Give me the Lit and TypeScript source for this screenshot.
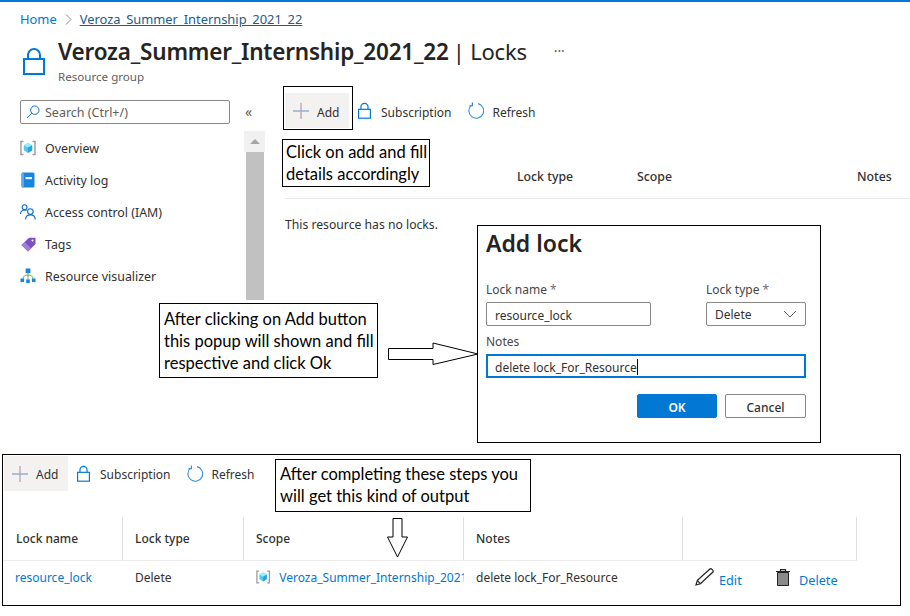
import { LitElement, html, css } from "lit";
import { customElement } from "lit/decorators.js";

const lockIcon = (w: number, h: number) => html`<svg width=${w} height=${h} viewBox="0 0 22 28" fill="none" stroke="#0078d4" stroke-width="2">
  <rect x="1" y="12" width="20" height="15" />
  <path d="M5 12V8a6 6 0 0 1 12 0v4" />
</svg>`;

const plusIcon = html`<svg width="16" height="16" viewBox="0 0 16 16">
  <path d="M0 8h16" stroke="#7f9cc4" stroke-width="1.2" />
  <path d="M8 0v16" stroke="#b29cb4" stroke-width="1.2" />
</svg>`;

const refreshIcon = html`<svg width="17" height="17" viewBox="0 0 17 17" fill="none" stroke="#2f8fdc" stroke-width="1.1">
  <path d="M11 1.6A7.4 7.4 0 1 1 4.4 3.2" />
  <path d="M5.4 0.6v3.2H2.4" stroke="#3a7fd0" />
</svg>`;

const cubeIcon = html`<svg width="16" height="16" viewBox="0 0 16 16">
  <path d="M3.5 1.5H1v13h2.5M12.5 1.5H15v13h-2.5" fill="none" stroke="#9a9a9a" stroke-width="1.4" />
  <path d="M8 3l4.2 2.3v5L8 13l-4.2-2.7v-5z" fill="#50c8ef" />
  <path d="M8 3l4.2 2.3L8 7.6 3.8 5.3z" fill="#9cebff" />
  <path d="M8 7.6l4.2-2.3v5L8 13z" fill="#2aa5d8" />
</svg>`;

const bookIcon = html`<svg width="14" height="16" viewBox="0 0 14 16">
  <rect x="0.5" y="0.5" width="13" height="15" rx="1.5" fill="#1b84dc" />
  <rect x="0.5" y="0.5" width="2.5" height="15" rx="1" fill="#5ea9e8" />
  <rect x="4.5" y="5" width="6.5" height="2.2" fill="#e6f2fb" />
</svg>`;

const peopleIcon = html`<svg width="16" height="16" viewBox="0 0 16 16" fill="none" stroke="#0f6fc6" stroke-width="1.1">
  <circle cx="4.6" cy="3.2" r="2.4" />
  <path d="M0.5 10c0-2.6 1.7-4 4-4 .8 0 1.5.2 2 .5" />
  <circle cx="10.4" cy="7.6" r="2.8" />
  <path d="M5.6 15.5c0-2.8 2-4.6 4.8-4.6s4.8 1.8 4.8 4.6" />
</svg>`;

const tagIcon = html`<svg width="15" height="15" viewBox="0 0 15 15">
  <path d="M0.5 8L8 0.8 14.5 0.8V7L7 14.5z" fill="#7e4fc4" />
  <path d="M0.5 8L7 14.5 10 11.5 4 5z" fill="#a07fd8" />
  <circle cx="11.5" cy="3.6" r="1" fill="#fff" />
</svg>`;

const treeIcon = html`<svg width="16" height="16" viewBox="0 0 16 16">
  <path d="M8 4v8M3 11c0-3 2-4 5-4s5 1 5 4" fill="none" stroke="#5cb85c" stroke-width="1" />
  <rect x="5.6" y="0.5" width="4.8" height="4.5" fill="#1b84dc" />
  <rect x="0.5" y="10.5" width="3.6" height="3.6" fill="#1b84dc" />
  <rect x="6.2" y="11.5" width="3.6" height="3.6" fill="#1b84dc" />
  <rect x="11.9" y="10.5" width="3.6" height="3.6" fill="#1b84dc" />
</svg>`;

const searchIcon = html`<svg width="14" height="14" viewBox="0 0 14 14" fill="none" stroke="#0f6fc6" stroke-width="1">
  <circle cx="8.8" cy="5.2" r="4.2" />
  <path d="M5.8 8.2L1 13" />
</svg>`;

const chevronIcon = html`<svg width="14" height="8" viewBox="0 0 14 8" fill="none" stroke="#605e5c" stroke-width="1">
  <path d="M1 1l6 6 6-6" />
</svg>`;

const crumbChevron = html`<svg width="7" height="11" viewBox="0 0 7 11" fill="none" stroke="#8a8886" stroke-width="1">
  <path d="M1 0.5l5 5-5 5" />
</svg>`;

const pencilIcon = html`<svg width="20" height="18" viewBox="0 0 20 18" fill="none" stroke="#222" stroke-width="1.2">
  <path d="M1 17l1.4-4.6L14.6 1.2a1.6 1.6 0 0 1 2.2 0l.9.9a1.6 1.6 0 0 1 0 2.2L5.4 15.8z" />
  <path d="M2.4 12.4l3 3.4" />
</svg>`;

const trashIcon = html`<svg width="14" height="17" viewBox="0 0 14 17">
  <path d="M1.5 3.5h11V16.5h-11z" fill="#8a8a8a" stroke="#222" stroke-width="1" />
  <path d="M0 2.5h14M4.5 2.5V0.7h5v1.8" fill="none" stroke="#222" stroke-width="1.2" />
</svg>`;

const rightArrow = html`<svg width="92" height="24" viewBox="0 0 92 24" fill="#fff" stroke="#000" stroke-width="1">
  <path d="M0.5 6.5H45V1L90 12 45 22.5V17.5H0.5z" />
</svg>`;

const downArrow = html`<svg width="22" height="40" viewBox="0 0 22 40" fill="#fff" stroke="#000" stroke-width="1">
  <path d="M6 0.5H15V19H20.5L10.5 39 0.5 19H6z" />
</svg>`;

const navItems = [
  { icon: cubeIcon, label: "Overview" },
  { icon: bookIcon, label: "Activity log" },
  { icon: peopleIcon, label: "Access control (IAM)" },
  { icon: tagIcon, label: "Tags" },
  { icon: treeIcon, label: "Resource visualizer" },
];

const toolbar = html`
  <div class="toolbar">
    <div class="tool add">${plusIcon}<span>Add</span></div>
    <div class="tool sub">${lockIcon(13, 17)}<span>Subscription</span></div>
    <div class="tool refresh">${refreshIcon}<span>Refresh</span></div>
  </div>
`;

@customElement("app-root")
export class AppRoot extends LitElement {
  static styles = css`
    :host {
      display: block;
      width: 910px;
      height: 616px;
      background: #fff;
      color: #323130;
      font-family: "Noto Sans", "Open Sans", sans-serif;
      font-size: 12px;
      overflow: hidden;
    }
    .top {
      position: relative;
      height: 452px;
      border-top: 2px solid #0078d4;
      box-sizing: border-box;
    }
    .crumbs {
      display: flex;
      align-items: center;
      gap: 8px;
      height: 34px;
      padding-left: 20px;
      font-size: 12.9px;
    }
    .crumbs .home {
      color: #0078d4;
    }
    .crumbs .current {
      color: #1d5c8c;
      text-decoration: underline;
    }
    .head {
      display: flex;
      height: 50px;
      padding-left: 23px;
      gap: 13px;
    }
    .head .lock {
      padding-top: 11px;
    }
    .title {
      display: flex;
      align-items: baseline;
      font-size: 22.5px;
      line-height: 31px;
      letter-spacing: -0.2px;
      color: #252423;
    }
    .title b {
      font-weight: 600;
    }
    .title .page {
      margin-left: 4px;
      font-size: 22px;
      font-weight: 400;
    }
    .title .more {
      margin-left: 27px;
      color: #605e5c;
      font-size: 14px;
      position: relative;
      top: -4px;
    }
    .kind {
      color: #605e5c;
      font-size: 11.6px;
      line-height: 14px;
    }
    .body {
      display: flex;
    }
    .side {
      width: 265px;
      flex: none;
      padding-top: 14px;
      box-sizing: border-box;
    }
    .search-row {
      display: flex;
      align-items: center;
      padding-left: 20px;
    }
    .search {
      display: flex;
      align-items: center;
      gap: 5px;
      width: 210px;
      height: 24px;
      box-sizing: border-box;
      border: 1px solid #8a8886;
      border-radius: 2px;
      padding-left: 5px;
      color: #605e5c;
      font-size: 12.5px;
    }
    .collapse {
      margin-left: 15px;
      color: #605e5c;
      font-size: 14px;
      line-height: 20px;
    }
    .nav-wrap {
      display: flex;
      margin-top: 7px;
      height: 169px;
    }
    .nav {
      flex: 1;
      padding-left: 20px;
      font-size: 12.4px;
    }
    .nav-item {
      display: flex;
      align-items: center;
      height: 32px;
      margin-top: 1px;
      margin-bottom: -1px;
    }
    .nav-icon {
      display: flex;
      justify-content: center;
      width: 16px;
      margin-right: 9px;
    }
    .scroll {
      width: 21px;
      flex: none;
      display: flex;
      flex-direction: column;
      align-items: center;
    }
    .scroll .up {
      width: 21px;
      height: 21px;
      background: #f1f1f1;
      display: flex;
      align-items: center;
      justify-content: center;
    }
    .scroll .up i {
      width: 0;
      height: 0;
      border-left: 5px solid transparent;
      border-right: 5px solid transparent;
      border-bottom: 5px solid #a6a6a6;
    }
    .scroll .thumb {
      width: 18px;
      flex: 1;
      background: #c1c1c1;
    }
    .main {
      flex: 1;
      padding: 7px 0 0 20px;
    }
    .toolbar {
      display: flex;
      align-items: stretch;
      height: 35px;
    }
    .tool {
      display: flex;
      align-items: center;
    }
    .tool span {
      padding-top: 4px;
    }
    .result .tool span {
      padding-top: 2px;
    }
    .tool.add {
      width: 64px;
      box-sizing: border-box;
      padding-left: 8px;
      gap: 8px;
      background: #f3f2f1;
    }
    .tool.sub {
      margin-left: 9px;
      gap: 10px;
    }
    .tool.refresh {
      margin-left: 16px;
      gap: 8px;
    }
    .locks-head {
      display: grid;
      grid-template-columns: 120px 220px 1fr;
      align-items: center;
      height: 44px;
      margin-top: 26px;
      padding-left: 232px;
      border-bottom: 1px solid #edebe9;
      font-weight: 500;
      font-size: 12.3px;
    }
    .empty {
      margin-top: 18px;
      line-height: 16px;
      font-size: 12.2px;
    }
    .note {
      position: absolute;
      box-sizing: border-box;
      border: 1.5px solid #000;
      background: #fff;
      color: #000;
      font-family: Lato, "Liberation Sans", sans-serif;
      font-size: 16.5px;
      line-height: 22px;
      padding: 1px 0 0 3px;
      white-space: nowrap;
    }
    .note.add-note {
      left: 282px;
      top: 137px;
      width: 148px;
      height: 48px;
    }
    .note.popup-note {
      left: 159px;
      top: 301px;
      width: 219px;
      height: 75px;
      padding: 4px 0 0 4px;
    }
    .add-frame {
      position: absolute;
      left: 283px;
      top: 84px;
      width: 70px;
      height: 44px;
      box-sizing: border-box;
      border: 1.5px solid #000;
    }
    .arrow {
      position: absolute;
      line-height: 0;
    }
    .arrow.right {
      left: 387.5px;
      top: 340px;
    }
    .dialog {
      position: absolute;
      left: 477px;
      top: 223px;
      width: 344px;
      height: 218px;
      box-sizing: border-box;
      border: 1.5px solid #000;
      background: #fff;
      padding: 2px 14px 0 8px;
    }
    .dialog h2 {
      margin: 0;
      font-size: 23px;
      font-weight: 600;
      line-height: 30px;
      color: #252423;
    }
    .fields {
      display: grid;
      grid-template-columns: 165px 100px;
      justify-content: space-between;
      margin-top: 23px;
    }
    .dialog label {
      display: block;
      line-height: 17px;
      margin-bottom: 4px;
      color: #484644;
    }
    .dialog label em {
      color: #7a6a80;
      font-style: normal;
    }
    .input {
      display: flex;
      align-items: center;
      justify-content: space-between;
      height: 24px;
      box-sizing: border-box;
      border: 1px solid #8a8886;
      border-radius: 2px;
      padding: 2px 8px 0;
    }
    .input.select {
      padding-top: 0;
    }
    .notes-label {
      margin-top: 7px;
    }
    .input.focused {
      border: 2px solid #0078d4;
      border-radius: 0;
      justify-content: flex-start;
      padding: 2px 7px 0;
    }
    .caret {
      width: 1px;
      height: 16px;
      background: #000;
    }
    .actions {
      display: flex;
      justify-content: flex-end;
      gap: 8px;
      margin-top: 16px;
    }
    .btn {
      display: flex;
      align-items: center;
      justify-content: center;
      width: 81px;
      height: 24px;
      box-sizing: border-box;
      border: 1px solid #8a8886;
      border-radius: 2px;
      padding-top: 2px;
      font-weight: 500;
    }
    .btn.primary {
      width: 80px;
      background: #0078d4;
      border-color: #0078d4;
      color: #fff;
      font-weight: 600;
    }
    .result {
      position: relative;
      margin: 2px 0 0 2px;
      width: 899px;
      height: 152px;
      box-sizing: border-box;
      border: 1.5px solid #000;
      padding: 1px 0 0 1px;
    }
    .result .note {
      left: 272px;
      top: 4px;
      width: 256px;
      height: 53px;
      padding: 3px 0 0 4px;
    }
    .result .arrow {
      left: 384px;
      top: 63px;
    }
    .table {
      display: grid;
      grid-template-columns: 120px 121px 220px 219px 174px;
      margin: 26px 0 0 -1px;
    }
    .table .th {
      display: flex;
      align-items: center;
      height: 43px;
      padding-left: 12px;
      box-sizing: border-box;
      font-weight: 500;
      border-right: 1px solid #e1dfdd;
    }
    .table .th:first-of-type,
    .table .td:first-of-type {
      padding-left: 13px;
    }
    .table .th:last-of-type {
      border-right: none;
    }
    .table .rule {
      grid-column: 1 / -1;
      height: 1px;
      background: #edebe9;
    }
    .table .td {
      display: flex;
      align-items: center;
      height: 32px;
      padding-left: 12px;
      min-width: 0;
      overflow: hidden;
      white-space: nowrap;
    }
    .link {
      color: #0078d4;
    }
    .scope {
      gap: 9px;
    }
    .scope .link {
      overflow: hidden;
    }
    .act {
      display: flex;
      align-items: flex-end;
      gap: 4px;
      width: 81px;
      font-size: 12.7px;
    }
    .act.trash {
      gap: 9px;
    }
    .act span {
      position: relative;
      top: 3px;
    }
  `;

  render() {
    return html`
      <div class="top">
        <div class="crumbs">
          <span class="home">Home</span>
          ${crumbChevron}
          <span class="current">Veroza_Summer_Internship_2021_22</span>
        </div>
        <div class="head">
          <div class="lock">${lockIcon(22, 28)}</div>
          <div>
            <div class="title">
              <b>Veroza_Summer_Internship_2021_22</b>
              <span class="page">| Locks</span>
              <span class="more">···</span>
            </div>
            <div class="kind">Resource group</div>
          </div>
        </div>
        <div class="body">
          <div class="side">
            <div class="search-row">
              <div class="search">${searchIcon}<span>Search (Ctrl+/)</span></div>
              <span class="collapse">«</span>
            </div>
            <div class="nav-wrap">
              <div class="nav">
                ${navItems.map(
                  (item) => html`
                    <div class="nav-item">
                      <span class="nav-icon">${item.icon}</span>
                      <span>${item.label}</span>
                    </div>
                  `
                )}
              </div>
              <div class="scroll">
                <div class="up"><i></i></div>
                <div class="thumb"></div>
              </div>
            </div>
          </div>
          <div class="main">
            ${toolbar}
            <div class="locks-head">
              <span>Lock type</span>
              <span>Scope</span>
              <span>Notes</span>
            </div>
            <div class="empty">This resource has no locks.</div>
          </div>
        </div>

        <div class="add-frame"></div>
        <div class="note add-note">Click on add and fill<br />details accordingly</div>
        <div class="note popup-note">
          After clicking on Add button<br />this popup will shown and fill<br />respective and click Ok
        </div>
        <div class="arrow right">${rightArrow}</div>
        <div class="dialog">
          <h2>Add lock</h2>
          <div class="fields">
            <div>
              <label>Lock name <em>*</em></label>
              <div class="input">resource_lock</div>
            </div>
            <div>
              <label>Lock type <em>*</em></label>
              <div class="input select">Delete ${chevronIcon}</div>
            </div>
          </div>
          <label class="notes-label">Notes</label>
          <div class="input focused">delete lock_For_Resource<span class="caret"></span></div>
          <div class="actions">
            <div class="btn primary">OK</div>
            <div class="btn">Cancel</div>
          </div>
        </div>
      </div>

      <div class="result">
        ${toolbar}
        <div class="note">After completing these steps you<br />will get this kind of output</div>
        <div class="arrow">${downArrow}</div>
        <div class="table">
          <div class="th">Lock name</div>
          <div class="th">Lock type</div>
          <div class="th">Scope</div>
          <div class="th">Notes</div>
          <div class="th"></div>
          <div class="rule"></div>
          <div class="td"><span class="link">resource_lock</span></div>
          <div class="td">Delete</div>
          <div class="td scope">${cubeIcon}<span class="link">Veroza_Summer_Internship_2021_22</span></div>
          <div class="td">delete lock_For_Resource</div>
          <div class="td">
            <div class="act">${pencilIcon}<span class="link">Edit</span></div>
            <div class="act trash">${trashIcon}<span class="link">Delete</span></div>
          </div>
        </div>
      </div>
    `;
  }
}
